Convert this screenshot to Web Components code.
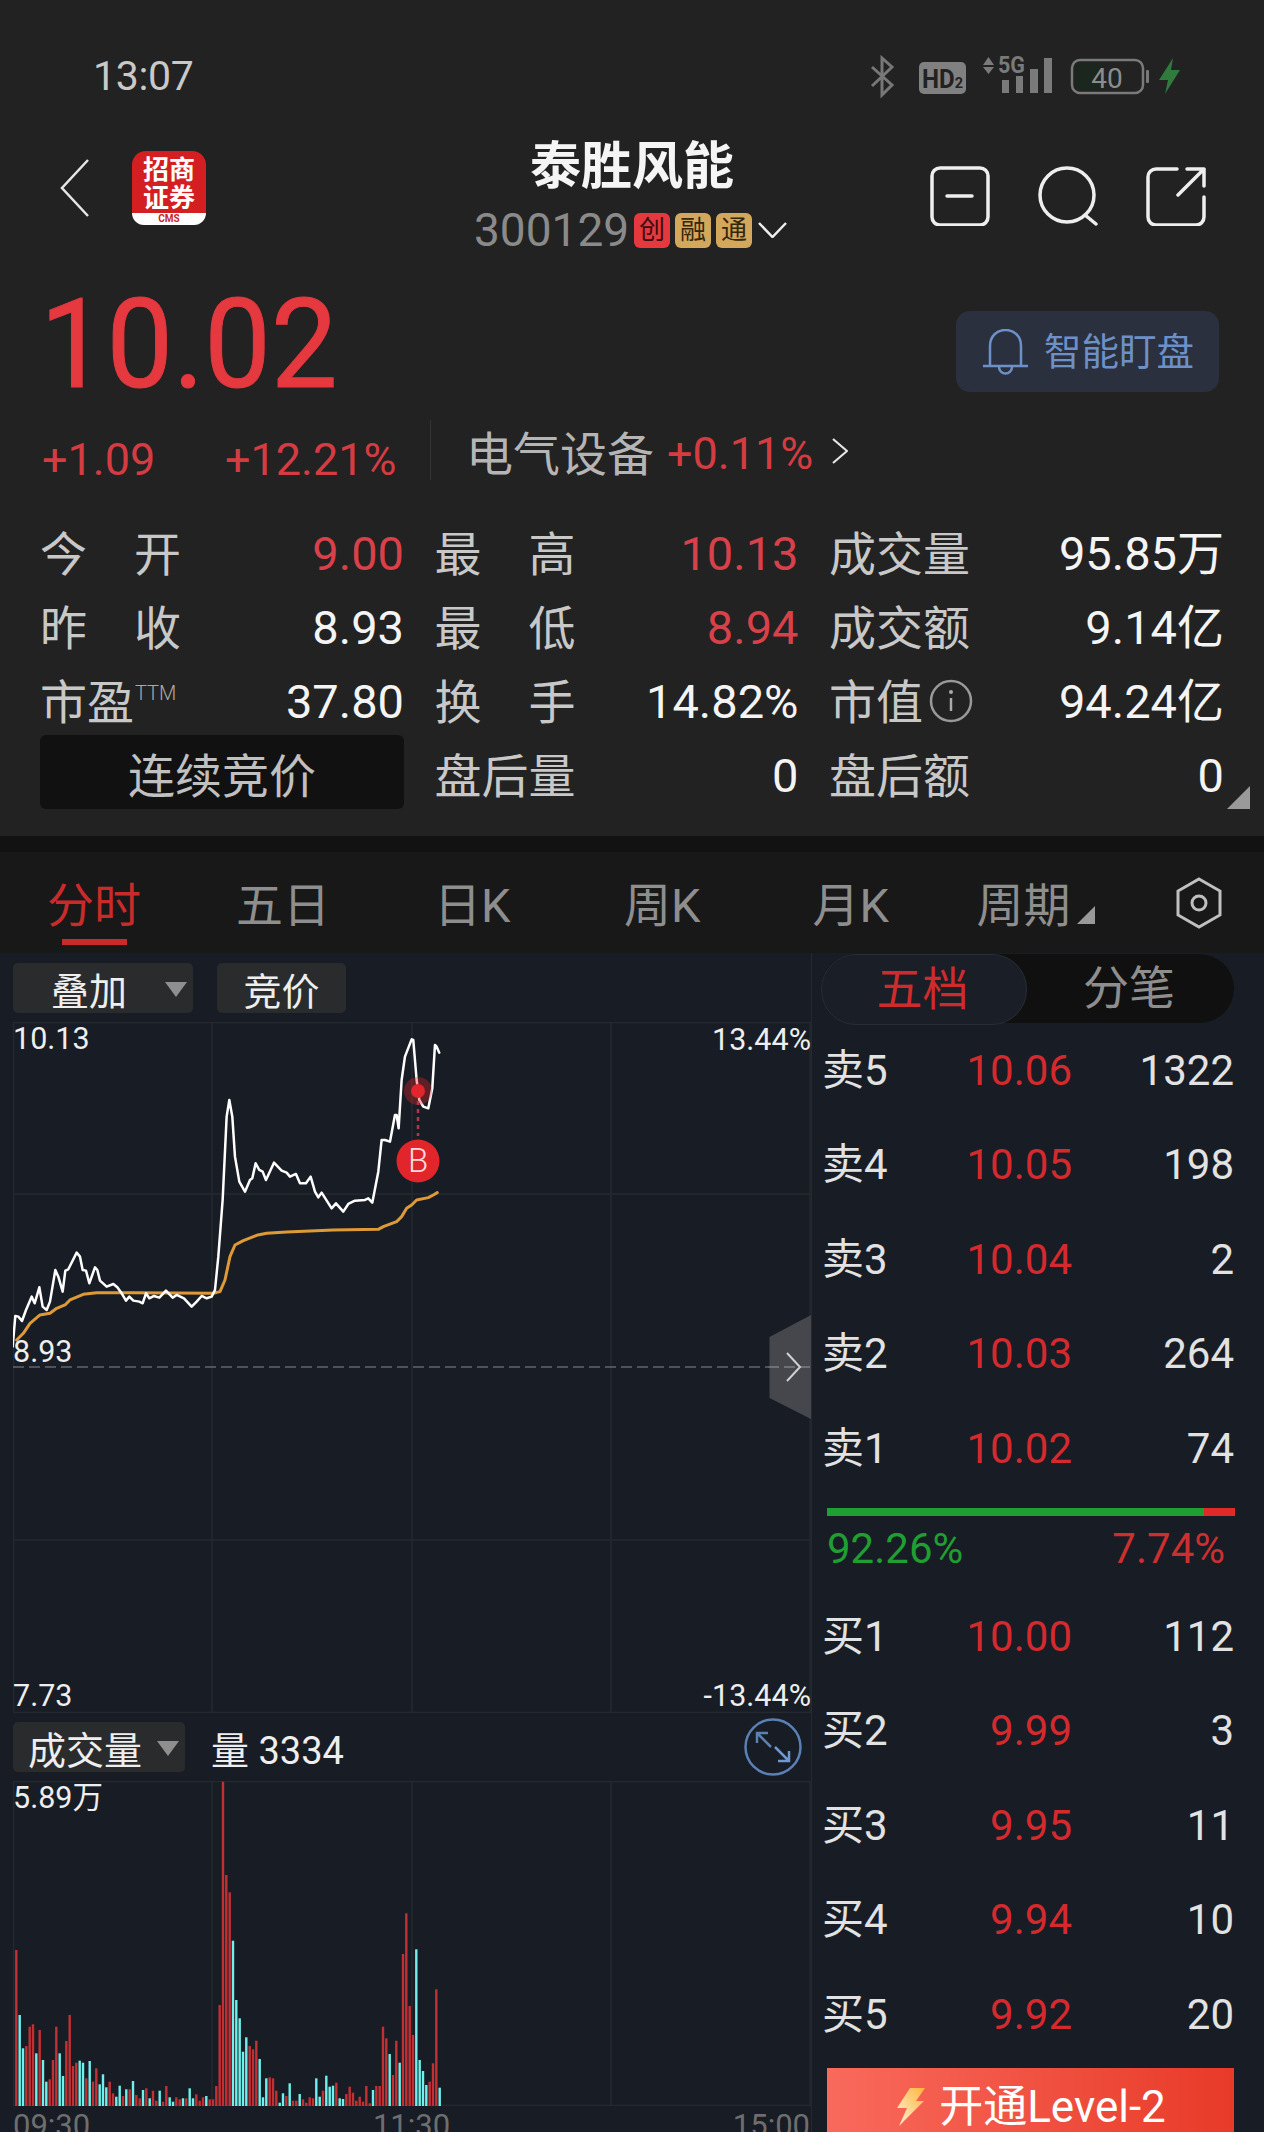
<!DOCTYPE html>
<html lang="zh-CN">
<head>
<meta charset="utf-8">
<title>泰胜风能</title>
<style>
  html, body { margin: 0; padding: 0; }
  body {
    width: 1264px; height: 2132px; overflow: hidden;
    background: #181c24; color: #eee;
    font-family: Roboto, "Noto Sans CJK SC", sans-serif;
  }
  status-bar, stock-nav, price-panel { background: #222; }
  .market { display: flex; height: 1179px; }
</style>
</head>
<body>
<status-bar></status-bar>
<stock-nav name="泰胜风能" code="300129"></stock-nav>
<price-panel></price-panel>
<quote-grid>
  <quote-cell label="今开" value="9.00" up></quote-cell>
  <quote-cell label="最高" value="10.13" up></quote-cell>
  <quote-cell label="成交量" value="95.85万"></quote-cell>
  <quote-cell label="昨收" value="8.93"></quote-cell>
  <quote-cell label="最低" value="8.94" up></quote-cell>
  <quote-cell label="成交额" value="9.14亿"></quote-cell>
  <quote-cell label="市盈" note="TTM" value="37.80"></quote-cell>
  <quote-cell label="换手" value="14.82%"></quote-cell>
  <quote-cell label="市值" info value="94.24亿"></quote-cell>
  <session-box>连续竞价</session-box>
  <quote-cell label="盘后量" value="0"></quote-cell>
  <quote-cell label="盘后额" value="0"></quote-cell>
</quote-grid>
<period-tabs></period-tabs>
<div class="market">
  <time-chart></time-chart>
  <order-book></order-book>
</div>

<script>
class StatusBar extends HTMLElement {
  connectedCallback() {
    this.attachShadow({ mode: 'open' }).innerHTML = `
      <style>
        :host { display: flex; height: 130px; position: relative; }
        .time { margin: 55px 0 0 93px; font-size: 41px; line-height: 42px; color: #c9c9c9; letter-spacing: -.3px; }
        svg { margin: 50px 0 0 auto; display: block; }
        text { font-family: Roboto, sans-serif; }
      </style>
      <div class="time">13:07</div>
      <svg width="394" height="50" viewBox="870 50 394 50">
        <path d="M872 67 892 85 882 95V58L892 67 872 86" fill="none" stroke="#777" stroke-width="3"/>
        <rect x="919" y="62" width="47" height="32" rx="5" fill="#808080"/>
        <text x="922" y="88" font-size="25" font-weight="700" fill="#222" textLength="41" lengthAdjust="spacingAndGlyphs">HD<tspan font-size="15">2</tspan></text>
        <path d="M983 65 988.5 57 994 65ZM983 67H994L988.5 74Z" fill="#7a7a7a"/>
        <text x="998" y="73" font-size="23" font-weight="700" fill="#7a7a7a" textLength="27" lengthAdjust="spacingAndGlyphs">5G</text>
        <rect x="1002" y="80" width="7" height="13" fill="#7a7a7a"/>
        <rect x="1016" y="76" width="7" height="17" fill="#7a7a7a"/>
        <rect x="1030" y="69" width="8" height="24" fill="#7a7a7a"/>
        <rect x="1044" y="58" width="8" height="35" fill="#7a7a7a"/>
        <rect x="1075" y="62" width="29" height="29" rx="6" fill="#1b261e"/>
        <rect x="1072" y="60" width="71" height="33" rx="8" fill="none" stroke="#7a7a7a" stroke-width="2.5"/>
        <rect x="1146" y="70" width="3" height="13" rx="1" fill="#7a7a7a"/>
        <text x="1107" y="88" font-size="28" fill="#8c8c8c" text-anchor="middle">40</text>
        <path d="M1173 58 1159 80H1168L1165 94 1180 70H1171Z" fill="#2f7a3c"/>
      </svg>`;
  }
}

class StockNav extends HTMLElement {
  connectedCallback() {
    this.attachShadow({ mode: 'open' }).innerHTML = `
      <style>
        :host { display: grid; grid-template-columns: 1fr 316px 1fr; height: 132px; }
        .left { display: flex; align-items: center; padding: 0 0 16px 60px; gap: 42px; }
        .logo {
          width: 74px; height: 74px; border-radius: 14px; background: #d41f22;
          display: flex; flex-direction: column; align-items: center;
        }
        .logo .mark {
          flex: 1; width: 100%; text-align: center; padding-top: 3px;
          font: 700 26px/28px "Noto Sans CJK SC", sans-serif; color: #fff;
        }
        .logo .cms {
          width: 100%; height: 12px; background: #fff; color: #c8262b; text-align: center;
          font: 700 10px/12px Roboto, sans-serif; border-radius: 0 0 14px 14px;
        }
        .mid { text-align: center; padding-top: 7px; }
        .name { font-size: 51px; line-height: 60px; font-weight: 700; color: #f5f5f5; white-space: nowrap; }
        .code { display: flex; align-items: center; height: 46px; margin-top: 10px; color: #8a8a8a; font-size: 46px; font-weight: 400; }
        .tag {
          width: 36px; height: 35px; border-radius: 6px; margin-left: 5px; background: #d4a85c; color: #35260c;
          font-size: 26px; line-height: 35px; font-weight: 400; text-align: center;
        }
        .tag.red { background: #e5383f; color: #3c0d0f; margin-left: 5px; }
        .down { margin-left: 6px; flex: none; }
        .right { display: flex; justify-content: flex-end; align-items: center; padding-right: 58px; gap: 48px; }
      </style>
      <div class="left">
        <svg width="30" height="60" viewBox="0 0 30 60"><path d="M28 2 2 30 28 58" fill="none" stroke="#e6e6e6" stroke-width="2.5"/></svg>
        <div class="logo">
          <div class="mark">招商<br>证券</div>
          <div class="cms">CMS</div>
        </div>
      </div>
      <div class="mid">
        <div class="name">${this.getAttribute('name')}</div>
        <div class="code">
          <span>${this.getAttribute('code')}</span>
          <span class="tag red">创</span><span class="tag">融</span><span class="tag">通</span>
          <svg class="down" width="29" height="16" viewBox="0 0 29 16"><path d="M1 1 14.5 15 28 1" fill="none" stroke="#eee" stroke-width="2.5"/></svg>
        </div>
      </div>
      <div class="right">
        <svg width="60" height="60" viewBox="0 0 60 60" fill="none" stroke="#eee" stroke-width="3.5" stroke-linecap="round">
          <rect x="2" y="2" width="56" height="57" rx="8"/><path d="M17 30H42"/>
        </svg>
        <svg width="60" height="60" viewBox="0 0 60 60" fill="none" stroke="#eee" stroke-width="3.5" stroke-linecap="round">
          <circle cx="29" cy="29" r="27"/><path d="M47 49 58 58"/>
        </svg>
        <svg width="60" height="60" viewBox="0 0 60 60" fill="none" stroke="#eee" stroke-width="3.5" stroke-linecap="round" stroke-linejoin="round">
          <path d="M31 3H10A8 8 0 0 0 2 11V51A8 8 0 0 0 10 59H50A8 8 0 0 0 58 51V31"/>
          <path d="M32 29 58 3M41 3H58V20"/>
        </svg>
      </div>`;
  }
}

class PricePanel extends HTMLElement {
  connectedCallback() {
    this.attachShadow({ mode: 'open' }).innerHTML = `
      <style>
        :host { display: block; height: 254px; }
        .top { display: flex; justify-content: space-between; align-items: flex-start; height: 158px; padding: 0 45px 0 48px; }
        .price {
          margin: 20px 0 0 -8px; font-size: 124px; line-height: 126px; color: #e5383f;
          -webkit-text-stroke: 1px #e5383f;
          transform: scaleX(.955); transform-origin: left center;
        }
        .watch {
          margin-top: 49px; width: 263px; height: 81px; border-radius: 14px; background: #2a303e; color: #6e90c8;
          display: flex; align-items: center; gap: 16px; padding-left: 27px; box-sizing: border-box; font-size: 37.5px;
        }
        .watch span { margin-bottom: 7px; }
        .change { display: flex; align-items: center; height: 60px; padding-left: 42px; font-size: 45px; color: #d43c42; }
        .a { width: 183px; margin-top: 18px; }
        .b { width: 205px; margin-top: 18px; }
        .line { width: 1px; height: 60px; background: #353535; }
        .sector { margin-left: 35px; color: #b5b5b5; font-size: 47px; }
        .pct { margin: 6px 0 0 13px; }
        .go { margin: 2px 0 0 19px; }
      </style>
      <div class="top">
        <div class="price">10.02</div>
        <div class="watch">
          <svg width="45" height="46" viewBox="0 0 45 46" fill="none" stroke="#6e90c8" stroke-width="2.5">
            <path d="M7 37V17C7 7 14 1 22.5 1S38 7 38 17V37M0 37H45M16 38A6.5 6.5 0 0 0 29 38"/>
          </svg>
          <span>智能盯盘</span>
        </div>
      </div>
      <div class="change">
        <span class="a">+1.09</span><span class="b">+12.21%</span><span class="line"></span>
        <span class="sector">电气设备</span><span class="pct">+0.11%</span>
        <svg class="go" width="16" height="26" viewBox="0 0 16 26"><path d="M1 1 15 13 1 25" fill="none" stroke="#e6e6e6" stroke-width="2.2"/></svg>
      </div>`;
  }
}

class QuoteGrid extends HTMLElement {
  connectedCallback() {
    this.attachShadow({ mode: 'open' }).innerHTML = `
      <style>
        :host {
          display: grid; grid-template-columns: 364px 364px 395px; grid-auto-rows: 74px; column-gap: 30.5px;
          padding: 0 0 24px 40px; position: relative; background: #222;
        }
        .corner { position: absolute; left: 1227px; top: 270px; }
      </style>
      <slot></slot>
      <svg class="corner" width="23" height="23" viewBox="0 0 23 23"><path d="M0 23 23 0V23Z" fill="#9a9a9a"/></svg>`;
  }
}

class QuoteCell extends HTMLElement {
  connectedCallback() {
    const label = this.getAttribute('label');
    const chars = label.length === 2 && !this.hasAttribute('note') && !this.hasAttribute('info');
    const extra = this.hasAttribute('note')
      ? `<span class="note">${this.getAttribute('note')}</span>`
      : this.hasAttribute('info')
        ? `<svg class="info" width="44" height="44" viewBox="0 0 44 44"><circle cx="22" cy="22" r="20" fill="none" stroke="#999" stroke-width="2.5"/><circle cx="22" cy="13" r="2" fill="#aaa"/><path d="M22 19V32" stroke="#aaa" stroke-width="2.5"/></svg>`
        : '';
    // 万/亿 must not push the baseline of the digits down
    const value = this.getAttribute('value').replace(/[万亿]/, '<span class="unit">$&</span>');
    this.attachShadow({ mode: 'open' }).innerHTML = `
      <style>
        :host { display: flex; justify-content: space-between; align-items: center; font-size: 47px; }
        .label { display: flex; align-items: center; color: #c8c8c8; white-space: nowrap; margin-bottom: 6px; }
        .label.split { width: 141px; justify-content: space-between; }
        .note { font-size: 20px; font-weight: 300; color: #aaa; align-self: flex-start; margin: 17px 0 0 1px; }
        .info { margin: 6px 0 0 6px; }
        .value { color: #f4f4f4; white-space: nowrap; }
        .unit { line-height: 0; }
        :host([up]) .value { color: #d8404a; }
      </style>
      <div class="label ${chars ? 'split' : ''}">${chars ? `<span>${label[0]}</span><span>${label[1]}</span>` : label}${extra}</div>
      <div class="value">${value}</div>`;
  }
}

class SessionBox extends HTMLElement {
  connectedCallback() {
    this.attachShadow({ mode: 'open' }).innerHTML = `
      <style>
        :host { display: flex; align-items: center; justify-content: center; margin: -3px 0 3px 0; border-radius: 6px; background: #111; color: #c0c0c0; font-size: 47px; }
      </style>
      <slot></slot>`;
  }
}

class PeriodTabs extends HTMLElement {
  connectedCallback() {
    const tabs = ['分时', '五日', '日K', '周K', '月K'];
    this.attachShadow({ mode: 'open' }).innerHTML = `
      <style>
        :host {
          display: grid; grid-template-columns: 189px 198px 190px 188.5px 164px 199px auto; align-items: center;
          height: 101px; padding-left: 47px; background: #181818; border-top: 16px solid #121212; box-sizing: content-box;
          font-size: 47px; color: #8e8e8e;
        }
        .tab { position: relative; margin-top: 7px; white-space: nowrap; line-height: 60px; }
        .on { color: #c92b2b; justify-self: start; }
        .on::after { content: ""; position: absolute; left: 15px; top: 63px; width: 65px; height: 6px; background: #c92b2b; }
        .more { display: flex; align-items: flex-end; gap: 6px; }
        .more svg { margin-bottom: 12px; }
      </style>
      ${tabs.map((t, i) => `<div class="tab ${i === 0 ? 'on' : ''}">${t}</div>`).join('')}
      <div class="tab more"><span>周期</span><svg width="18" height="18" viewBox="0 0 18 18"><path d="M0 18 18 0V18Z" fill="#999"/></svg></div>
      <svg width="46" height="52" viewBox="0 0 46 52" fill="none" stroke="#c0c0c0" stroke-width="3">
        <path d="M23 2 44 14V38L23 50 2 38V14Z"/><circle cx="23" cy="26" r="7"/>
      </svg>`;
  }
}

class DropButton extends HTMLElement {
  connectedCallback() {
    const pad = this.getAttribute('pad');
    this.attachShadow({ mode: 'open' }).innerHTML = `
      <style>
        :host {
          display: flex; align-items: center; justify-content: ${pad ? 'flex-start' : 'center'}; position: relative;
          box-sizing: border-box; height: 50px; width: ${this.getAttribute('w')}px; padding-left: ${pad || 0}px;
          background: #2a2b2d; border-radius: 5px; font-size: 38px; color: #eee;
        }
        svg { position: absolute; right: 6px; top: 19px; }
      </style>
      <slot></slot>
      ${pad ? '<svg width="22" height="15" viewBox="0 0 22 15"><path d="M0 0H22L11 15Z" fill="#8f8f8f"/></svg>' : ''}`;
  }
}

// 分时线 coordinates are read off a 3x crop of the chart, origin (0,1000)
const PRICE_LINE = '38,1040 46,948 55,950 66,963 78,930 95,890 104,910 118,862 128,920 140,930 150,905 166,810 175,830 188,875 196,812 205,808 230,758 240,770 248,810 258,812 268,850 285,802 292,810 300,842 320,860 340,852 352,862 365,880 378,902 388,890 400,902 418,905 428,910 438,880 448,895 462,888 478,893 498,872 518,893 530,885 552,895 575,920 590,905 605,888 620,895 635,890 645,870 655,770 668,600 680,350 688,300 697,350 705,470 718,545 735,575 750,540 757,535 767,490 778,510 788,515 798,540 822,488 845,512 860,518 870,530 888,522 900,550 918,550 932,530 945,575 955,592 965,578 995,625 1008,610 1030,635 1045,612 1065,602 1095,600 1105,595 1117,608 1135,515 1145,420 1155,420 1170,425 1185,345 1190,345 1196,385 1205,240 1215,170 1235,118 1240,120 1250,240 1258,300 1270,320 1285,325 1297,265 1305,135 1310,140 1318,158';
const AVG_LINE = '50,1020 70,1000 90,970 120,945 150,940 170,925 195,915 210,900 250,883 290,878 400,878 640,880 660,875 675,840 690,770 705,735 730,722 770,706 800,700 860,696 1000,690 1135,688 1150,680 1190,665 1205,650 1220,625 1235,615 1250,600 1285,593 1300,585 1312,578';

// volume bars: top y in the same crop scale (origin y 1680, baseline 1278), r = up, c = down
const VOLUME = 'r810 c1005 c1105 r1098 r1040 r1033 c1120 r1050 c1140 c1205 r1198 r1140 r1040 c1120 c1188 r1083 r1005 r1158 r1148 c1142 c1148 r1195 c1143 r1205 r1165 c1213 c1183 c1222 r1205 r1240 c1250 c1217 r1248 c1228 r1228 c1203 r1245 r1255 c1230 r1225 c1255 r1232 r1262 c1232 r1265 r1218 c1252 c1265 r1252 r1258 c1255 r1255 c1225 c1255 r1243 r1262 r1252 c1248 r1258 r1258 r1218 r975 r305 r585 r637 c782 c960 c1015 c1115 c1072 r1098 r1108 r1082 c1137 c1252 c1195 r1192 r1195 r1232 c1268 c1240 r1248 c1210 r1262 r1262 c1242 r1258 r1268 r1252 r1255 c1195 c1250 r1232 c1187 c1220 c1217 r1208 c1255 c1257 r1242 r1220 r1238 r1262 r1250 r1265 r1218 r1270 c1230 r1218 r1218 r1040 r1075 c1122 r1185 r1082 c1148 r822 r700 r978 r1065 c808 c1140 c1173 c1215 r1205 r1150 r928 c1223'.split(' ');

class TimeChart extends HTMLElement {
  connectedCallback() {
    const bars = VOLUME.map((b, i) => {
      const top = 1680 + Number(b.slice(1)) / 3;
      const x = (49 + i * 10) / 3 - 1.2;
      return `<rect x="${x.toFixed(1)}" y="${top.toFixed(1)}" width="2.4" height="${(2106 - top).toFixed(1)}" fill="${b[0] === 'r' ? '#c23033' : '#6ff0ec'}"/>`;
    }).join('');
    this.attachShadow({ mode: 'open' }).innerHTML = `
      <style>
        :host { display: block; width: 811px; padding-left: 13px; box-sizing: border-box; flex: none; font-size: 30.5px; color: #eee; }
        .tools { display: flex; gap: 24px; height: 69px; padding-top: 10px; box-sizing: border-box; }
        .plot { position: relative; width: 798px; }
        .plot svg { display: block; }
        .price { height: 691px; }
        .vol { height: 325px; }
        .lb { position: absolute; line-height: 30px; white-space: nowrap; }
        .volbar { position: relative; display: flex; align-items: center; height: 68px; box-sizing: border-box; padding-top: 0; }
        .qty { margin-left: 26px; font-size: 38px; }
        .expand { position: absolute; left: 731px; top: 5px; }
        .axis { display: flex; justify-content: space-between; width: 797px; padding-top: 5px; line-height: 30px; font-size: 31px; color: #6e6e6e; }
      </style>
      <div class="tools">
        <drop-button w="180" pad="38">叠加</drop-button>
        <drop-button w="129">竞价</drop-button>
      </div>
      <div class="plot price">
        <svg width="798" height="691" viewBox="13 1022 798 691" fill="none">
          <g stroke="#25282f" stroke-width="1.5">
            <path d="M13.5 1022V1713M212 1022V1713M412 1022V1713M611 1022V1713M810 1022V1713M13 1022.5H811M13 1194H811M13 1540H811M13 1712.5H811"/>
          </g>
          <path d="M13 1367H768" stroke="#85878c" stroke-width="1.2" stroke-dasharray="11 5"/>
          <g transform="translate(0 1000) scale(.3333)" stroke-linejoin="round" stroke-linecap="round">
            <polyline points="${AVG_LINE}" stroke="#de9a37" stroke-width="9"/>
            <polyline points="${PRICE_LINE}" stroke="#fff" stroke-width="7.5"/>
          </g>
          <circle cx="418" cy="1091" r="14" fill="#e1252b" fill-opacity=".35"/>
          <circle cx="418" cy="1091" r="7" fill="#e1252b"/>
          <path d="M418 1101V1136" stroke="#b8344a" stroke-width="2.5" stroke-dasharray="4 4"/>
          <circle cx="418" cy="1161" r="21.5" fill="#e1252b"/>
          <path d="M811 1315 769.5 1337V1398L811 1419Z" fill="#45474d"/>
          <path d="M768 1367H810" stroke="#9a9ca0" stroke-width="1.2" stroke-dasharray="11 5"/>
          <path d="M787 1353 800 1367 787 1381" stroke="#d0d0d0" stroke-width="2"/>
        </svg>
        <span class="lb" style="left:0;top:2px">10.13</span>
        <span class="lb" style="right:0;top:3px">13.44%</span>
        <span class="lb" style="left:0;top:315px">8.93</span>
        <span class="lb" style="left:0;top:659px">7.73</span>
        <span class="lb" style="right:0;top:659px">-13.44%</span>
        <span class="lb" style="left:405px;top:124px;font-size:33px;font-weight:300;color:#ffdcdc;transform:translateX(-50%)">B</span>
      </div>
      <div class="volbar">
        <drop-button w="172" pad="15">成交量</drop-button>
        <span class="qty">量 3334</span>
        <svg class="expand" width="58" height="58" viewBox="0 0 58 58" fill="none" stroke="#5a80b5" stroke-width="2.5">
          <ellipse cx="29" cy="29" rx="27.5" ry="27.5"/>
          <path d="M13 15 27 29M13 25V15H24"/>
          <path d="M45 43 31 29M45 33V43H34" stroke="#6f98d0"/>
        </svg>
      </div>
      <div class="plot vol">
        <svg width="798" height="325" viewBox="13 1781 798 325" fill="none">
          <path d="M13.5 1781V2106M212 1781V2106M412 1781V2106M611 1781V2106M810 1781V2106M13 1781.5H811M13 2105.5H811" stroke="#25282f" stroke-width="1.5"/>
          ${bars}
        </svg>
        <span class="lb" style="left:0;top:2px">5.89万</span>
      </div>
      <div class="axis"><span>09:30</span><span>11:30</span><span>15:00</span></div>`;
  }
}

class BookRow extends HTMLElement {
  connectedCallback() {
    this.attachShadow({ mode: 'open' }).innerHTML = `
      <style>
        :host {
          display: grid; grid-template-columns: 120px 127px 162px; align-items: center; height: 94.5px;
          font-size: 42px; color: #e2e2e2;
        }
        .label { white-space: nowrap; margin-left: -3px; }
        .label b { font-weight: 400; line-height: 0; }
        .p { text-align: right; color: #d42a2e; }
        .q { text-align: right; }
      </style>
      <div class="label"><b>${this.getAttribute('side')}</b>${this.getAttribute('n')}</div>
      <div class="p">${this.getAttribute('price')}</div>
      <div class="q">${this.getAttribute('qty')}</div>`;
  }
}

class OrderBook extends HTMLElement {
  connectedCallback() {
    const sell = [[5, '10.06', 1322], [4, '10.05', 198], [3, '10.04', 2], [2, '10.03', 264], [1, '10.02', 74]];
    const buy = [[1, '10.00', 112], [2, '9.99', 3], [3, '9.95', 11], [4, '9.94', 10], [5, '9.92', 20]];
    const rows = (side, list) => list.map(r =>
      `<book-row side="${side}" n="${r[0]}" price="${r[1]}" qty="${r[2]}"></book-row>`).join('');
    this.attachShadow({ mode: 'open' }).innerHTML = `
      <style>
        :host { display: block; width: 453px; flex: none; box-sizing: border-box; padding-left: 13px; border-left: 1px solid #25282f; overflow: hidden; }
        .switch {
          display: grid; grid-template-columns: 206px 1fr; width: 413px; height: 69px; margin: 1px 0 0 -4px;
          border-radius: 35px; background: #101010; font-size: 46px; line-height: 69px; text-align: center; color: #8e8e8e;
        }
        .switch div { margin-right: 3px; }
        .switch .on { margin-right: 0; padding-right: 3px; background: #1a1e27; border: 1px solid #2a2d33; border-radius: 35px; color: #cf2b2d; }
        .bar { display: flex; width: 408px; height: 8px; margin: 12.5px 0 0 2px; background: #e02a2a; }
        .bar i { display: block; width: 377px; background: #1f9e32; }
        .pcts { display: flex; justify-content: space-between; width: 398px; margin-left: 2px; height: 64px; align-items: center; font-size: 42px; color: #cc2f2f; }
        .pcts span:first-child { color: #1f9e32; }
        .buys { margin-top: 9px; }
        .open {
          display: flex; align-items: center; justify-content: center; gap: 14px; width: 407px; height: 78px; margin: 6.5px 0 0 2px;
          background: linear-gradient(90deg, #f96a5c, #e83a28); color: #fff; font-size: 44px;
        }
        .open b { font-weight: 400; line-height: 0; }
      </style>
      <div class="switch"><div class="on">五档</div><div>分笔</div></div>
      ${rows('卖', sell)}
      <div class="bar"><i></i></div>
      <div class="pcts"><span>92.26%</span><span>7.74%</span></div>
      <div class="buys">${rows('买', buy)}</div>
      <div class="open">
        <svg width="30" height="38" viewBox="0 0 30 38"><defs><linearGradient id="bolt" x1="0" y1="1" x2="1" y2="0"><stop offset="0" stop-color="#fff3d8"/><stop offset="1" stop-color="#ffb43c"/></linearGradient></defs><path d="M15 0H30L21 13H29L4 38 12 20H2Z" fill="url(#bolt)"/></svg>
        <span><b>开通</b>Level-2</span>
      </div>`;
  }
}

customElements.define('status-bar', StatusBar);
customElements.define('stock-nav', StockNav);
customElements.define('price-panel', PricePanel);
customElements.define('quote-grid', QuoteGrid);
customElements.define('quote-cell', QuoteCell);
customElements.define('session-box', SessionBox);
customElements.define('period-tabs', PeriodTabs);
customElements.define('drop-button', DropButton);
customElements.define('time-chart', TimeChart);
customElements.define('book-row', BookRow);
customElements.define('order-book', OrderBook);
</script>
</body>
</html>
